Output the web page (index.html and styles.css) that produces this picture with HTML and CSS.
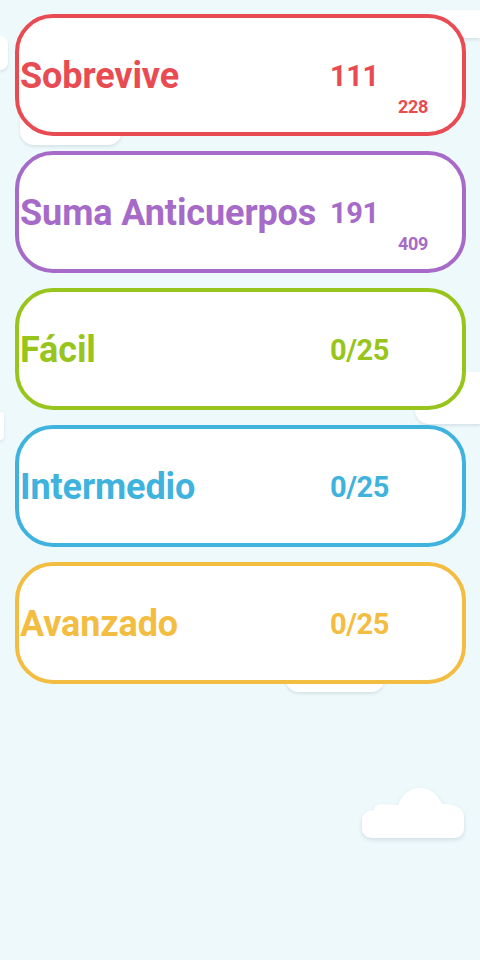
FILE: index.html
```html
<!DOCTYPE html>
<html lang="es">
<head>
<meta charset="utf-8">
<title>Niveles</title>
<link rel="stylesheet" href="styles.css">
</head>
<body>
<div class="sky" aria-hidden="true">
  <div class="cloud c1"></div>
  <div class="cloud c1b"></div>
  <div class="cloud c2"></div>
  <div class="cloud c3"></div>
  <div class="cloud c4"></div>
  <div class="cloud c5"></div>
  <svg class="bigcloud" width="110" height="56" viewBox="0 0 110 56">
    <path d="M14 24 C14 20 18 18 22 18 C26 18 32 19 38 19 C42 8 50 2 60 2 C70 2 78 8 82 18 C90 18 104 20 104 30 L104 42 C104 48 100 52 94 52 L12 52 C6 52 2 48 2 42 L2 34 C2 27 8 24 14 24 Z" fill="#ffffff"/>
  </svg>
</div>
<main class="list">
  <section class="card red">
    <span class="title">Sobrevive</span>
    <div class="score">
      <span class="num">111</span>
      <span class="sub">228</span>
    </div>
  </section>
  <section class="card purple">
    <span class="title">Suma Anticuerpos</span>
    <div class="score">
      <span class="num">191</span>
      <span class="sub">409</span>
    </div>
  </section>
  <section class="card green">
    <span class="title">Fácil</span>
    <div class="score plain">
      <span class="num">0/25</span>
    </div>
  </section>
  <section class="card blue">
    <span class="title">Intermedio</span>
    <div class="score plain">
      <span class="num">0/25</span>
    </div>
  </section>
  <section class="card yellow">
    <span class="title">Avanzado</span>
    <div class="score plain">
      <span class="num">0/25</span>
    </div>
  </section>
</main>
</body>
</html>
```
FILE: styles.css
```css
* { box-sizing: border-box; }

html, body {
  margin: 0;
  padding: 0;
}

body {
  width: 480px;
  height: 960px;
  background: #eef9fb;
  font-family: Roboto, "Liberation Sans", Arial, sans-serif;
  position: relative;
  overflow: hidden;
}

.sky {
  position: absolute;
  inset: 0;
  z-index: 0;
  overflow: hidden;
}

.cloud {
  position: absolute;
  background: #ffffff;
  border-radius: 14px;
  box-shadow: 0 2px 3px rgba(150, 175, 185, 0.28);
}

.c1 { left: 20px; top: 96px; width: 102px; height: 49px; }
.c1b { left: 0; top: 36px; width: 8px; height: 34px; border-radius: 0 17px 17px 0; }
.c2 { left: 430px; top: 10px; width: 50px; height: 28px; border-radius: 14px 0 0 14px; }
.c3 { left: 415px; top: 372px; width: 65px; height: 52px; border-radius: 14px 0 0 14px; }
.c4 { left: 0; top: 412px; width: 4px; height: 28px; border-radius: 0 14px 14px 0; }
.c5 { left: 285px; top: 650px; width: 100px; height: 42px; }

.bigcloud {
  position: absolute;
  left: 360px;
  top: 786px;
  filter: drop-shadow(0 2px 2px rgba(150, 175, 185, 0.35));
}

.list {
  position: relative;
  z-index: 1;
  display: flex;
  flex-direction: column;
  gap: 15px;
  padding: 14px 14px 0 15px;
}

.card {
  height: 122px;
  border: 4px solid;
  border-radius: 38px;
  background: #ffffff;
  display: flex;
  align-items: center;
  padding: 2px 0 0 1px;
}

.title {
  flex: 0 0 311px;
  font-size: 36px;
  line-height: 36px;
  font-weight: 700;
  letter-spacing: -0.1px;
  white-space: nowrap;
}

.score {
  display: flex;
  flex-direction: column;
  width: 97px;
  padding-top: 26px;
}

.score.plain { padding-top: 0; }

.num {
  font-size: 29px;
  line-height: 29px;
  font-weight: 700;
  letter-spacing: -0.4px;
  margin-left: -1px;
}

.sub {
  align-self: flex-end;
  margin-top: 7px;
  font-size: 18px;
  line-height: 18px;
  font-weight: 700;
  letter-spacing: -0.3px;
}

.red { border-color: #e84b51; color: #e84b51; }
.purple { border-color: #a66ac8; color: #a66ac8; }
.green { border-color: #98c51c; color: #98c51c; }
.blue { border-color: #3fb3de; color: #3fb3de; }
.yellow { border-color: #f3bd42; color: #f3bd42; }
```
